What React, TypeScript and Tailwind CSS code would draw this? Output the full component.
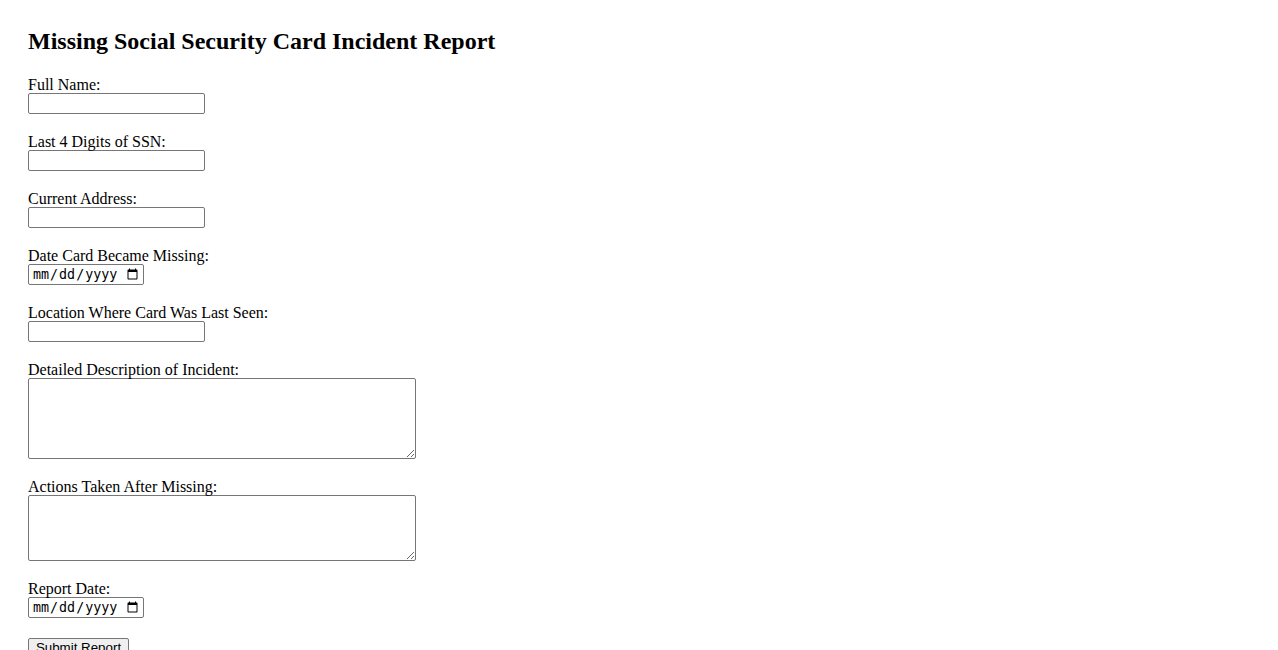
import React from "react"

const serif = "font-['Liberation_Serif','Times_New_Roman',serif]"
const inputCls =
  "block w-[177px] h-[21px] border border-[#767676] rounded-[2px] px-[2px] py-[1px] bg-white text-[13.33px] font-['Liberation_Sans',Arial,sans-serif] text-black"
const dateCls =
  "block w-[116px] h-[21px] border border-[#767676] rounded-[2px] pl-[3px] pr-[2px] bg-white text-[13.33px] font-['DejaVu_Sans_Mono',monospace] text-black"
const areaCls =
  "block w-[388px] border border-[#767676] rounded-[2px] p-[2px] bg-white text-[13.33px] leading-[15px] font-['DejaVu_Sans_Mono',monospace] text-black"

function Field({ label, children }: { label: string; children: React.ReactNode }) {
  return (
    <div className="mb-[16px]">
      <label className="block h-[20px] pt-[3px] leading-[18px]">{label}</label>
      {children}
    </div>
  )
}

export default function App() {
  return (
    <div className={`min-h-screen bg-white text-black text-[16px] pl-[28px] pt-[27px] ${serif}`}>
      <h2 className="text-[24px] font-bold leading-[28px] mb-[18px]">
        Missing Social Security Card Incident Report
      </h2>
      <form onSubmit={(e) => e.preventDefault()}>
        <Field label="Full Name:">
          <input type="text" className={inputCls} />
        </Field>
        <Field label="Last 4 Digits of SSN:">
          <input type="text" className={inputCls} />
        </Field>
        <Field label="Current Address:">
          <input type="text" className={inputCls} />
        </Field>
        <Field label="Date Card Became Missing:">
          <input type="date" className={dateCls} />
        </Field>
        <Field label="Location Where Card Was Last Seen:">
          <input type="text" className={inputCls} />
        </Field>
        <Field label="Detailed Description of Incident:">
          <textarea rows={5} className={`${areaCls} h-[81px]`} />
        </Field>
        <Field label="Actions Taken After Missing:">
          <textarea rows={4} className={`${areaCls} h-[66px]`} />
        </Field>
        <Field label="Report Date:">
          <input type="date" className={dateCls} />
        </Field>
        <button
          type="submit"
          className="mt-[4px] h-[21px] w-[101px] px-[6px] pt-0 pb-[3px] bg-[#efefef] border border-[#767676] rounded-[2px] text-[13.33px] leading-[15px] font-['Liberation_Sans',Arial,sans-serif] text-black"
        >
          Submit Report
        </button>
      </form>
    </div>
  )
}
